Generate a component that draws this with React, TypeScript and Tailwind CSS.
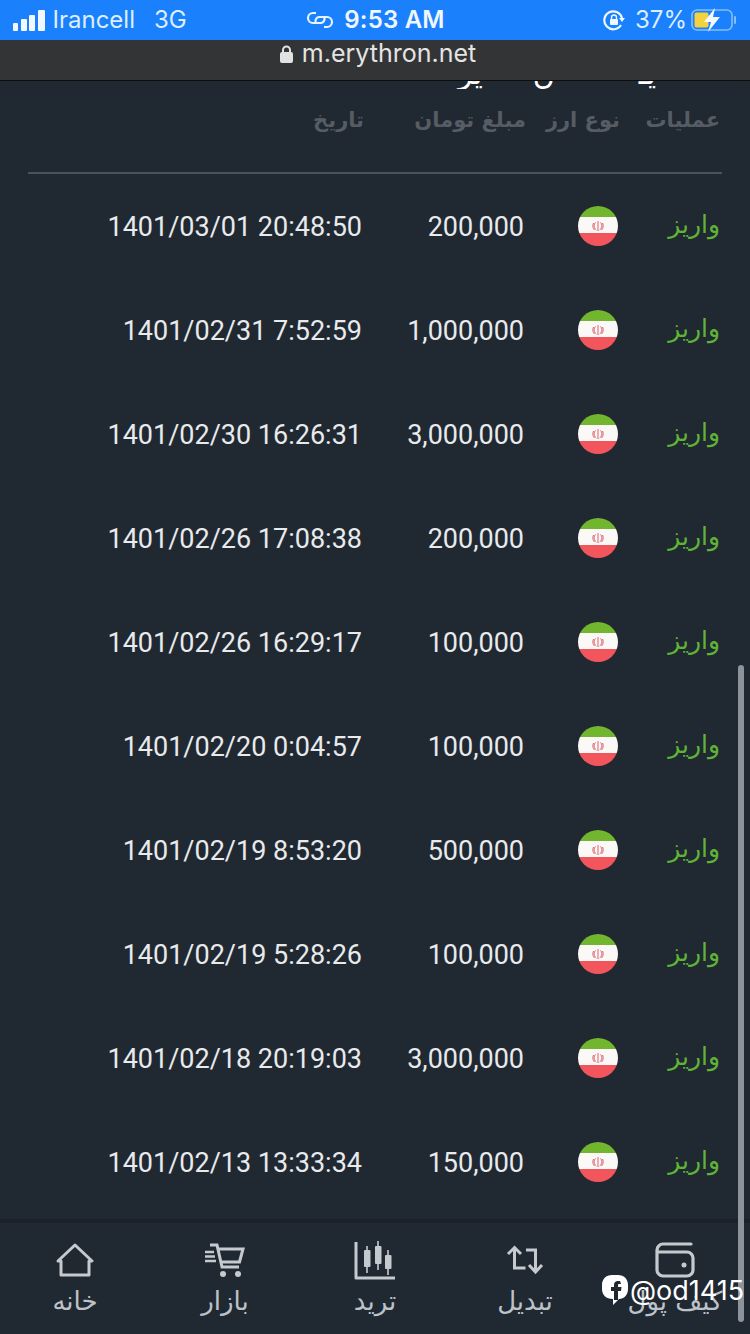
import React from "react";

const rows = [
  ["200,000", "1401/03/01 20:48:50"],
  ["1,000,000", "1401/02/31 7:52:59"],
  ["3,000,000", "1401/02/30 16:26:31"],
  ["200,000", "1401/02/26 17:08:38"],
  ["100,000", "1401/02/26 16:29:17"],
  ["100,000", "1401/02/20 0:04:57"],
  ["500,000", "1401/02/19 8:53:20"],
  ["100,000", "1401/02/19 5:28:26"],
  ["3,000,000", "1401/02/18 20:19:03"],
  ["150,000", "1401/02/13 13:33:34"],
];

function Flag() {
  return (
    <svg className="mb-[2px]" width="40" height="40" viewBox="0 0 40 40">
      <defs>
        <clipPath id="flagClip">
          <circle cx="20" cy="20" r="20" />
        </clipPath>
      </defs>
      <g clipPath="url(#flagClip)">
        <rect width="40" height="12" fill="#72b52f" />
        <rect y="11" width="40" height="16" fill="#fbf8f8" />
        <rect y="27" width="40" height="13" fill="#f2555c" />
      </g>
      <path d="M20 15v10M17.5 16.5c-2 2-1.5 6 .8 7.5M22.5 16.5c2 2 1.5 6-.8 7.5M15.5 17c-1.2 2.5-.6 5.5 1 7M24.5 17c1.2 2.5.6 5.5-1 7" stroke="#d8606a" strokeWidth="1" fill="none" />
    </svg>
  );
}

function Home() {
  return (
    <svg width="38" height="34" viewBox="0 0 38 34" fill="none" stroke="#c5cacf" strokeWidth="3" strokeLinejoin="round" strokeLinecap="round">
      <path d="M2 18 19 2l17 16h-3v14H5V18z" />
    </svg>
  );
}

function Cart() {
  return (
    <svg width="40" height="35" viewBox="0 0 40 35" fill="none" stroke="#c5cacf" strokeWidth="3">
      <path d="M5 2h7l5 22h17" />
      <path d="M13 6h25l-3.5 13H16" />
      <path d="M0 9h9M0 13.5h10M0 18h11" strokeWidth="2.4" />
      <circle cx="18" cy="31" r="3" fill="#c5cacf" stroke="none" />
      <circle cx="33" cy="31" r="3" fill="#c5cacf" stroke="none" />
    </svg>
  );
}

function Candles() {
  return (
    <svg width="42" height="39" viewBox="0 0 42 39" fill="none" stroke="#c5cacf">
      <path d="M2 1v36h39" strokeWidth="3" strokeLinejoin="round" />
      <path d="M13 5v27M24 0v29M34 9v25" strokeWidth="1.6" />
      <rect x="10" y="9" width="6.5" height="17" fill="#c5cacf" stroke="none" rx="1" />
      <rect x="21" y="5" width="6.5" height="18" fill="#c5cacf" stroke="none" rx="1" />
      <rect x="31" y="14" width="6.5" height="14" fill="#c5cacf" stroke="none" rx="1" />
    </svg>
  );
}

function Swap() {
  return (
    <svg width="38" height="30" viewBox="0 0 38 30" fill="none" stroke="#c5cacf" strokeWidth="3">
      <path d="M2 9 8.5 2.5 15 9M8.5 3v20h11" />
      <path d="M20 5h9.5v22M23 20l6.500 7 6.500-7" />
    </svg>
  );
}

function Wallet() {
  return (
    <svg width="40" height="36" viewBox="0 0 40 36" fill="none" stroke="#c5cacf" strokeWidth="3.2">
      <path d="M36 2H8a6 6 0 0 0-6 6v20a6 6 0 0 0 6 6h24a6 6 0 0 0 6-6V16a6 6 0 0 0-6-6H2" strokeLinecap="round" />
      <circle cx="29" cy="23" r="2.500" fill="#c5cacf" stroke="none" />
    </svg>
  );
}

const navItems = [
  { label: "خانه", icon: <Home /> },
  { label: "بازار", icon: <Cart /> },
  { label: "ترید", icon: <Candles /> },
  { label: "تبدیل", icon: <Swap /> },
  { label: "کیف پول", icon: <Wallet /> },
];

export default function App() {
  return (
    <div className="relative flex h-[1334px] w-[750px] flex-col overflow-hidden bg-[#202832] font-['Inter',sans-serif]">
      {/* Status bar */}
      <div className="flex h-[40px] shrink-0 items-center justify-between bg-[#1a80fb] pl-[13px] pr-[12px] text-[#dcefff]">
        <div className="flex w-[254px] items-center">
          <div className="flex items-end gap-[2.5px]">
            <span className="h-[8px] w-[5px] rounded-[1px] bg-[#f2f8ff]" />
            <span className="h-[12px] w-[6px] rounded-[1px] bg-[#f2f8ff]" />
            <span className="h-[16px] w-[6px] rounded-[1px] bg-[#f2f8ff]" />
            <span className="h-[21px] w-[7px] rounded-[1px] bg-[#f2f8ff]" />
          </div>
          <span className="ml-[8px] text-[24px] leading-none">Irancell</span>
          <span className="ml-[19px] text-[24px] leading-none">3G</span>
        </div>
        <div className="flex items-center gap-[10px]">
          <svg width="28" height="20" viewBox="0 0 28 20" fill="none" stroke="#e6f3ff" strokeWidth="2.2">
            <path d="M10 3H7a5 5 0 0 0 0 10h8a4 4 0 0 0 3-6" />
            <path d="M18 17h3a5 5 0 0 0 0-10h-8a4 4 0 0 0-3 6" />
          </svg>
          <span className="text-[24px] font-semibold leading-none tracking-[0.2px] text-[#eef7ff]">9:53 AM</span>
        </div>
        <div className="flex w-[254px] items-center justify-end">
          <svg width="22" height="24" viewBox="0 0 22 24" fill="none">
            <path d="M18 17a9 9 0 1 1 1-7" stroke="#eef7ff" strokeWidth="2.2" />
            <path d="M16 10h6l-3 4z" fill="#eef7ff" />
            <rect x="7" y="11" width="8" height="6" rx="1" fill="#eef7ff" />
            <path d="M8.500 11V9.500a2.500 2.500 0 0 1 5 0V11" stroke="#eef7ff" strokeWidth="1.4" />
          </svg>
          <span className="ml-[10px] text-[24px] leading-none">37%</span>
          <svg className="ml-[4px]" width="47" height="24" viewBox="0 0 47 24" fill="none">
            <rect x="1" y="2" width="40" height="20" rx="5" stroke="#86bdf8" strokeWidth="1.6" />
            <rect x="3.500" y="4.500" width="14" height="15" rx="2" fill="#f4d23d" />
            <path d="M44 9v6" stroke="#86bdf8" strokeWidth="2" strokeLinecap="round" />
            <path d="M24 0 13 14h7l-3 10 12-15h-7z" fill="#f4f9ff" />
          </svg>
        </div>
      </div>

      {/* URL bar */}
      <div className="flex h-[41px] shrink-0 items-start justify-center gap-[9px] border-b border-b-[#0c0d0e] bg-[#333436] pl-[6px] pt-[1px]">
        <svg className="mt-[4px]" width="13" height="18" viewBox="0 0 13 18" fill="#e2e2e2">
          <rect x="0" y="7" width="13" height="11" rx="2" />
          <path d="M3 8V5a3.500 3.500 0 0 1 7 0v3" stroke="#e2e2e2" strokeWidth="2" fill="none" />
        </svg>
        <span className="text-[25px] leading-[24px] text-[#e4e4e4]">m.erythron.net</span>
      </div>

      {/* Clipped title */}
      <div dir="rtl" className="flex h-[8px] shrink-0 overflow-hidden font-['DejaVu_Sans',sans-serif] text-[30px] leading-[30px] text-white">
        <span className="mr-[94px] mt-[-22px]">یـ</span>
        <span className="mr-[84px] mt-[-22px]">ن</span>
        <span className="mr-[50px] mt-[-22px]">یر</span>
      </div>

      {/* Table */}
      <main dir="rtl" className="flex-1 font-['DejaVu_Sans',sans-serif]">
        <div className="mx-[28px] grid h-[85px] grid-cols-[100px_94px_162px_1fr] border-b-2 border-b-[#4b525a] pr-[2px] pt-[13px] text-[21px] font-bold leading-[36px] text-[#565c63]">
          <span>عملیات</span>
          <span>نوع ارز</span>
          <span>مبلغ تومان</span>
          <span>تاریخ</span>
        </div>
        <div className="pt-[1px]">
          {rows.map(([amount, date], i) => (
            <div key={i} className="grid h-[104px] grid-cols-[102px_94px_162px_1fr] items-center pr-[30px]">
              <span className="mb-[6px] text-[25px] leading-none text-[#5fb337]">واریز</span>
              <Flag />
              <span dir="ltr" className="text-right font-['Roboto',sans-serif] text-[27px] font-normal leading-none text-[#e8eaec]">{amount}</span>
              <span dir="ltr" className="text-right font-['Roboto',sans-serif] text-[27px] font-normal leading-none text-[#e8eaec]">{date}</span>
            </div>
          ))}
        </div>
      </main>

      {/* Bottom nav */}
      <nav className="grid h-[115px] shrink-0 grid-cols-5 border-t-[4px] border-t-[#1b2229] bg-[#202832] pt-[17px] font-['DejaVu_Sans',sans-serif]">
        {navItems.map((n) => (
          <div key={n.label} className="flex flex-col items-center">
            <div className="flex h-[40px] items-center justify-center">{n.icon}</div>
            <span dir="rtl" className="mt-[4px] text-[26px] leading-[34px] text-[#bcc2c8]">{n.label}</span>
          </div>
        ))}
      </nav>

      {/* Scrollbar */}
      <div className="absolute right-[6px] top-[665px] h-[657px] w-[6px] rounded-full bg-[#8d939a]" />

      {/* Watermark */}
      <div className="absolute left-[601px] top-[1274px] flex items-center gap-[1px] text-white">
        <svg width="28" height="32" viewBox="0 0 28 32">
          <path d="M11 1h6c6 0 10 4 10 10v4c0 6-4 10-9 10l-6 6v-6C5 25 1 21 1 15v-4C1 5 5 1 11 1z" fill="#fff" />
          <path d="M19 7h-2c-3 0-4 2-4 4v2h-3v4h3v9h4v-9h3l.5-4H17v-2c0-.7.4-1 1-1h2z" fill="#20282f" />
        </svg>
        <span className="text-[27px] leading-none">@od1415</span>
      </div>
    </div>
  );
}
